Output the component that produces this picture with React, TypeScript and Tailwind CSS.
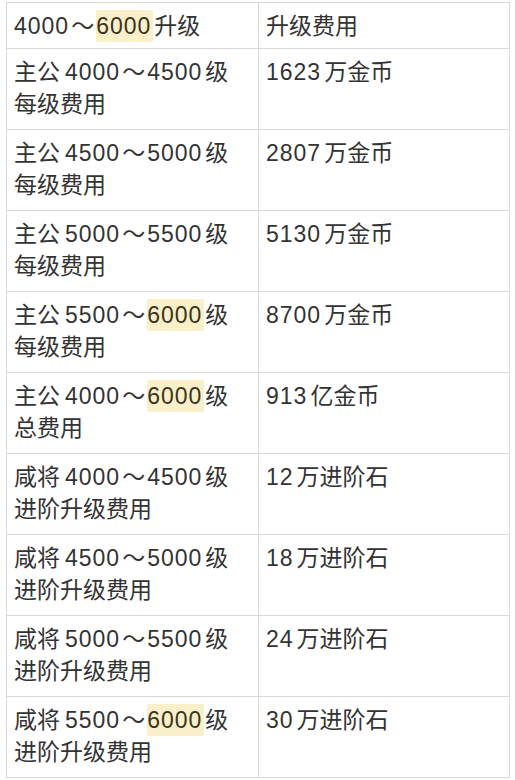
import React from "react";

type Row = { left: string[]; right: string; first?: boolean };

const rows: Row[] = [
  { left: ["4000～[6000]升级"], right: "升级费用", first: true },
  { left: ["主公4000～4500级", "每级费用"], right: "1623万金币" },
  { left: ["主公4500～5000级", "每级费用"], right: "2807万金币" },
  { left: ["主公5000～5500级", "每级费用"], right: "5130万金币" },
  { left: ["主公5500～[6000]级", "每级费用"], right: "8700万金币" },
  { left: ["主公4000～[6000]级", "总费用"], right: "913亿金币" },
  { left: ["咸将4000～4500级", "进阶升级费用"], right: "12万进阶石" },
  { left: ["咸将4500～5000级", "进阶升级费用"], right: "18万进阶石" },
  { left: ["咸将5000～5500级", "进阶升级费用"], right: "24万进阶石" },
  { left: ["咸将5500～[6000]级", "进阶升级费用"], right: "30万进阶石" },
];

// splits a line into CJK text, digit runs, tildes and highlighted [digits]
function Line({ text }: { text: string }) {
  const parts = text.match(/\[\d+\]|\d+|～|[^\d～\[]+/g) || [];
  return (
    <div className="whitespace-nowrap">
      {parts.map((p, i) => {
        const prevCjk = i > 0 && /[^\d～\[\]]/.test(parts[i - 1]);
        const nextCjk = i < parts.length - 1 && /^[^\d～\[]/.test(parts[i + 1]);
        if (p === "～") return <span key={i} className="mx-[2px]">～</span>;
        if (p.startsWith("[")) {
          return (
            <span
              key={i}
              className={`inline-block h-[32px] rounded-[2px] bg-[#f9efc8] text-[#3b3420] tracking-[1px] pr-[2px] ${nextCjk ? "mr-[1px]" : ""}`}
            >
              {p.slice(1, -1)}
            </span>
          );
        }
        if (/^\d+$/.test(p)) {
          return (
            <span key={i} className={`tracking-[1px] ${prevCjk ? "ml-[5px]" : ""} ${nextCjk ? "mr-[3px]" : ""}`}>
              {p}
            </span>
          );
        }
        return <span key={i}>{p}</span>;
      })}
    </div>
  );
}

export default function App() {
  return (
    <div
      className="w-[515px] h-[780px] bg-white pl-[6px] pt-[2px] overflow-hidden text-[#333333]"
      style={{ fontFamily: '"Liberation Sans", "Noto Sans CJK SC", sans-serif' }}
    >
      <table className="w-[503px] border-collapse table-fixed text-[23px] leading-[32px]">
        <colgroup>
          <col className="w-[252px]" />
          <col className="w-[251px]" />
        </colgroup>
        <tbody>
          {rows.map((row, i) => (
            <tr key={i} className={row.first ? "h-[46px]" : "h-[81px]"}>
              <td className="border border-[#d9d9d9] align-top px-[7px] pt-[7px]">
                {row.left.map((line, j) => (
                  <Line key={j} text={line} />
                ))}
              </td>
              <td className="border border-[#d9d9d9] align-top px-[7px] pt-[7px]">
                <Line text={row.right} />
              </td>
            </tr>
          ))}
        </tbody>
      </table>
    </div>
  );
}
